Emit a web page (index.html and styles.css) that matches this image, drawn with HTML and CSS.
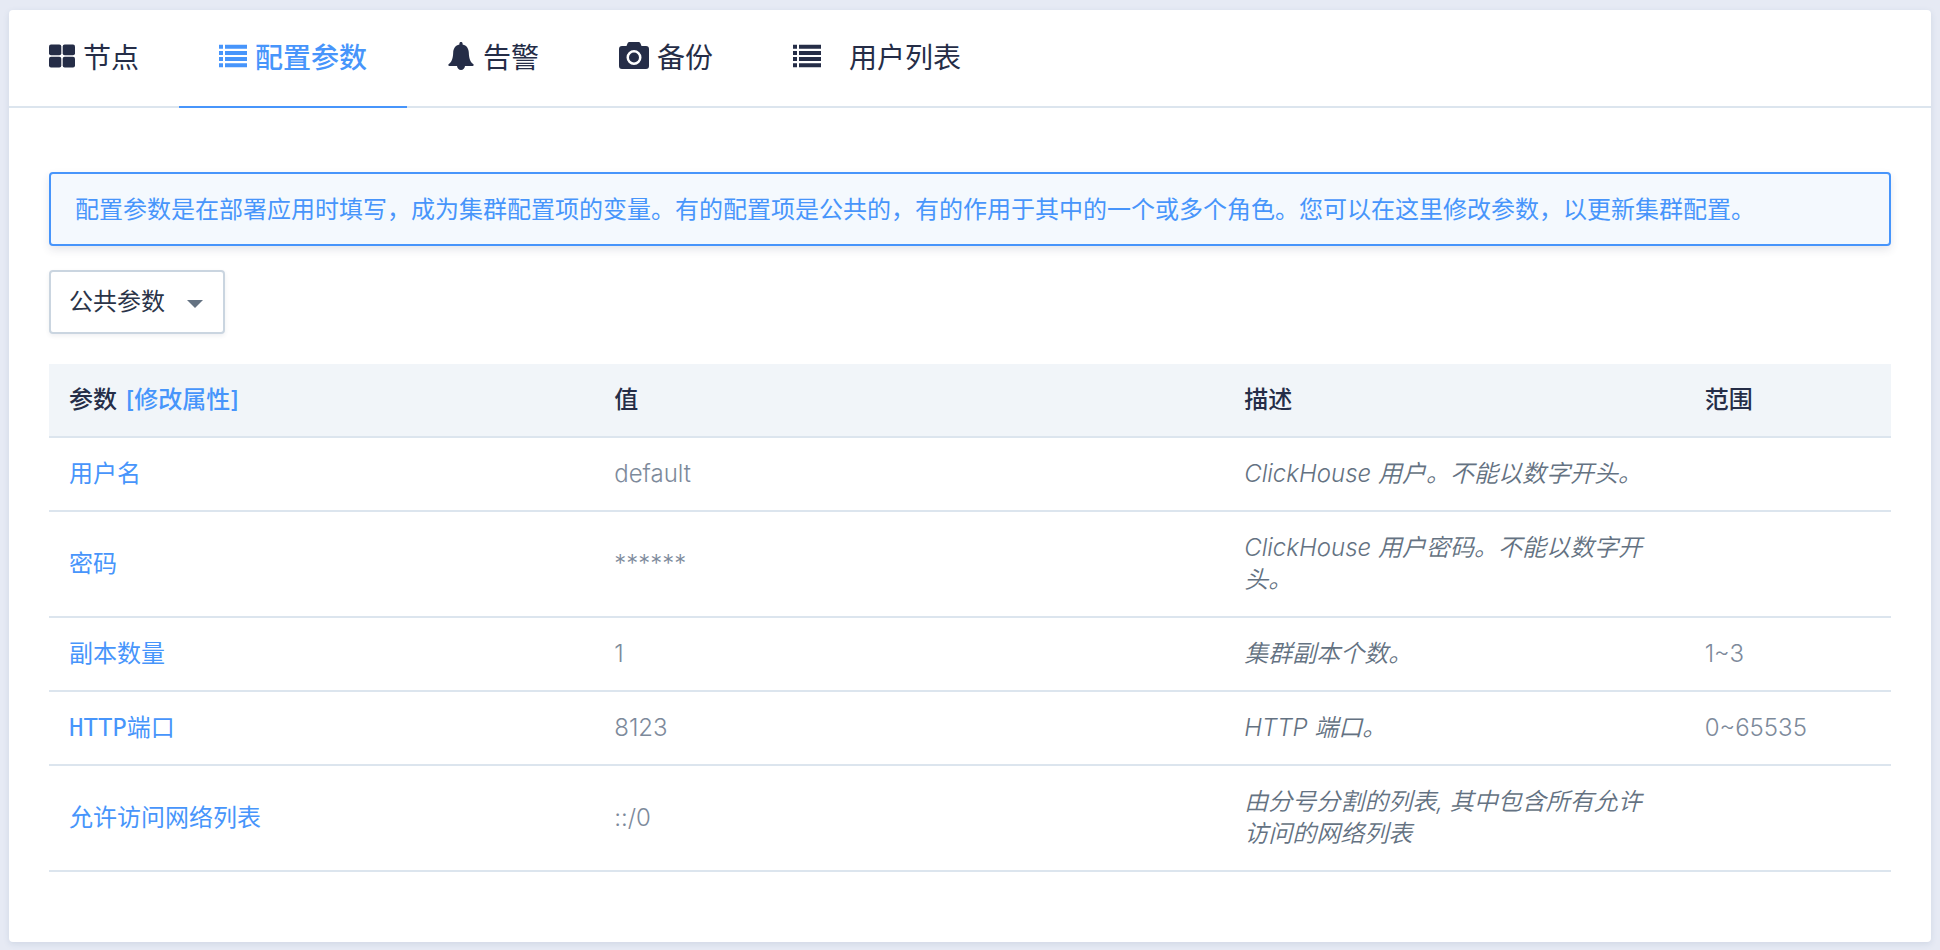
FILE: index.html
```html
<!DOCTYPE html>
<html lang="zh-CN">
<head>
<meta charset="utf-8">
<meta name="viewport" content="width=device-width, initial-scale=1">
<title>配置参数</title>
<link rel="stylesheet" href="styles.css">
</head>
<body>
<main class="card">
  <nav class="tabs">
    <a class="tab" href="#nodes">
      <svg class="icon" width="26" height="24" viewBox="0 0 26 24" aria-hidden="true"><rect x="0" y="0.500" width="12.300" height="10.700" rx="2"/><rect x="13.700" y="0.500" width="12.300" height="10.700" rx="2"/><rect x="0" y="12.700" width="12.300" height="10.700" rx="2"/><rect x="13.700" y="12.700" width="12.300" height="10.700" rx="2"/></svg>
      <span>节点</span>
    </a>
    <a class="tab tab-active" href="#params" aria-current="page">
      <svg class="icon" width="28" height="24" viewBox="0 0 28 24" aria-hidden="true"><path d="M0 .8h4v4H0zM6 .8h22v4H6zM0 7h4v4H0zM6 7h22v4H6zM0 13h4v4H0zM6 13h22v4H6zM0 19.200h4v4H0zM6 19.200h22v4H6z"/></svg>
      <span>配置参数</span>
    </a>
    <a class="tab" href="#alarms">
      <svg class="icon" width="28" height="28" viewBox="0 0 28 28" aria-hidden="true"><path d="M14 0c1 0 1.600.7 1.600 1.700v.7c4 .8 6 3.900 6.200 8 .2 5.600 1.200 9.200 4.600 11.800.6.600.3 1.800-.8 1.800H18c-.2 2.300-1.800 4-4 4s-3.800-1.700-4-4H2.400c-1.100 0-1.400-1.200-.8-1.800C5 19.600 6 16 6.200 10.400c.2-4.100 2.200-7.200 6.200-8v-.7C12.400.7 13 0 14 0z"/></svg>
      <span>告警</span>
    </a>
    <a class="tab" href="#backups">
      <svg class="icon" width="30" height="28" viewBox="0 0 30 28" aria-hidden="true"><path fill-rule="evenodd" d="M10.500 0h9c1 0 1.500.5 2 1.500L22.500 4H27a3 3 0 0 1 3 3v17a3 3 0 0 1-3 3H3a3 3 0 0 1-3-3V7a3 3 0 0 1 3-3h4.500l1-2.500C9 .5 9.500 0 10.500 0zM15 8a7.500 7.500 0 1 0 0 15 7.500 7.500 0 0 0 0-15zm0 2.500a5 5 0 1 1 0 10 5 5 0 0 1 0-10z"/></svg>
      <span>备份</span>
    </a>
    <a class="tab tab-spaced" href="#users">
      <svg class="icon" width="28" height="24" viewBox="0 0 28 24" aria-hidden="true"><path d="M0 .8h4v4H0zM6 .8h22v4H6zM0 7h4v4H0zM6 7h22v4H6zM0 13h4v4H0zM6 13h22v4H6zM0 19.200h4v4H0zM6 19.200h22v4H6z"/></svg>
      <span>用户列表</span>
    </a>
  </nav>

  <section class="content">
    <p class="notice">配置参数是在部署应用时填写，成为集群配置项的变量。有的配置项是公共的，有的作用于其中的一个或多个角色。您可以在这里修改参数，以更新集群配置。</p>

    <div class="picker">
      <select class="picker-select" aria-label="参数分组">
        <option>公共参数</option>
      </select>
      <svg class="picker-arrow" width="16" height="8" viewBox="0 0 16 8" aria-hidden="true"><path d="M0 0h16L8 8z"/></svg>
    </div>

    <table class="params">
      <colgroup>
        <col class="col-name"><col class="col-value"><col class="col-desc"><col class="col-range">
      </colgroup>
      <thead>
        <tr><th>参数 <a class="link edit-link" href="#edit">[修改属性]</a></th><th>值</th><th>描述</th><th>范围</th></tr>
      </thead>
      <tbody>
        <tr><td><a class="link" href="#user">用户名</a></td><td>default</td><td class="desc">ClickHouse 用户。不能以数字开头。</td><td></td></tr>
        <tr><td><a class="link" href="#password">密码</a></td><td>******</td><td class="desc">ClickHouse 用户密码。不能以数字开头。</td><td></td></tr>
        <tr><td><a class="link" href="#replicas">副本数量</a></td><td>1</td><td class="desc">集群副本个数。</td><td>1~3</td></tr>
        <tr><td><a class="link" href="#http-port">HTTP端口</a></td><td>8123</td><td class="desc">HTTP 端口。</td><td>0~65535</td></tr>
        <tr><td><a class="link" href="#networks">允许访问网络列表</a></td><td>::/0</td><td class="desc">由分号分割的列表, 其中包含所有允许访问的网络列表</td><td></td></tr>
      </tbody>
    </table>
  </section>
</main>
</body>
</html>
```
FILE: styles.css
```css
* {
  box-sizing: border-box;
}

body {
  margin: 0;
  padding: 10px 9px 8px;
  background: #e6eaf4;
  color: #252d47;
  font: 400 24px/32px Inter, "Noto Sans CJK SC", sans-serif;
}

.card {
  background: #fff;
  border-radius: 4px;
  box-shadow: 0 2px 6px rgba(50, 80, 120, 0.12);
}

.tabs {
  display: flex;
  border-bottom: 2px solid #dce5ee;
}

.tab {
  display: flex;
  align-items: center;
  gap: 8px;
  height: 98px;
  margin-bottom: -2px;
  padding: 0 40px;
  border-bottom: 2px solid transparent;
  color: #252d47;
  font-size: 28px;
  line-height: 40px;
  text-decoration: none;
}

.tab-active {
  border-bottom-color: #4795fb;
  color: #4795fb;
  font-weight: 500;
}

.tab-spaced {
  gap: 28px;
}

.icon {
  margin-bottom: 4px;
  fill: currentColor;
}

.content {
  padding: 64px 40px 70px;
}

.notice {
  margin: 0 0 24px;
  padding: 20px 24px 18px;
  border: 2px solid #4795fb;
  border-radius: 4px;
  background: #f4f9fe;
  box-shadow: 0 4px 8px rgba(50, 60, 90, 0.12);
  color: #4795fb;
}

.picker {
  position: relative;
  width: 176px;
  margin-bottom: 30px;
}

.picker-select {
  display: block;
  width: 100%;
  height: 64px;
  padding: 0 48px 0 18px;
  border: 2px solid #cad5e0;
  border-radius: 4px;
  background: #fff;
  box-shadow: 0 2px 4px rgba(50, 60, 90, 0.08);
  color: #2a3448;
  font: inherit;
  appearance: none;
}

.picker-arrow {
  position: absolute;
  top: 30px;
  right: 22px;
  fill: #647282;
  pointer-events: none;
}

.params {
  width: 100%;
  border-collapse: separate;
  border-spacing: 0;
  table-layout: fixed;
}

.col-name {
  width: 29.6%;
}

.col-value {
  width: 34.2%;
}

.col-desc {
  width: 25%;
}

.params th,
.params td {
  padding: 20px;
  border-bottom: 2px solid #dce5ee;
  text-align: left;
  vertical-align: middle;
}

.params th {
  background: #f1f5f9;
  font-weight: 500;
}

.params td {
  color: #7d8a9b;
  font-weight: 300;
}

.params .desc {
  color: #647282;
  font-weight: 350;
  font-style: italic;
}

.params .link {
  color: #4795fb;
  font-family: "DejaVu Sans Mono", "Noto Sans CJK SC", monospace;
  font-weight: 400;
  text-decoration: none;
}

.params .edit-link {
  margin-left: 2px;
  font-family: inherit;
  font-weight: 500;
}
```
